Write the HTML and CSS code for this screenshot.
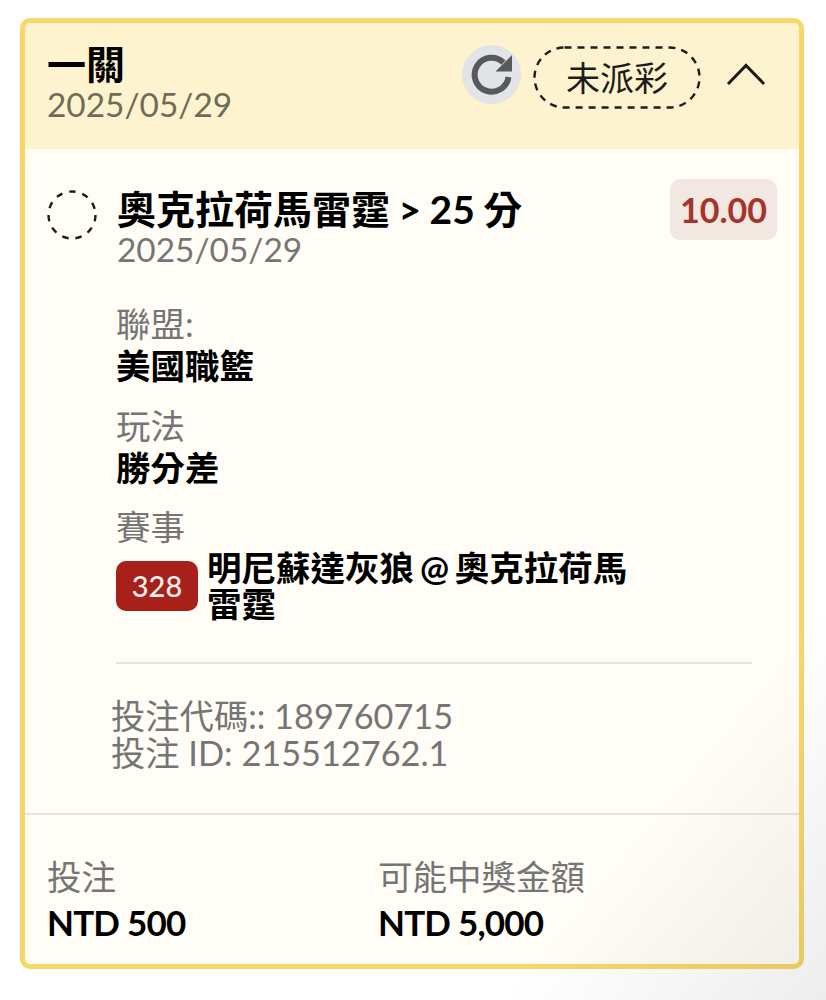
FILE: index.html
```html
<!DOCTYPE html>
<html>

<head>
    <meta charset="utf-8">
    <link rel="stylesheet" href="styles.css">
</head>

<body>
    <div class="card">
        <div class="card-head">
            <div class="head-title">
                <h1>一關</h1>
                <p>2025/05/29</p>
            </div>
            <div class="refresh">
                <svg width="59" height="59" viewBox="0 0 59 59">
                    <path d="M41.5 17.5A17 17 0 1 0 46.5 32" fill="none" stroke="#58595b" stroke-width="6"/>
                    <path d="M50 10V26.5H33.5Z" fill="#58595b"/>
                </svg>
            </div>
            <div class="status">
                <svg class="status-ring" width="168" height="63" viewBox="0 0 168 63">
                    <rect x="1.5" y="1.5" width="165" height="60" rx="30" fill="none" stroke="#1c1c1c" stroke-width="2.4" stroke-dasharray="7 6"/>
                </svg>
                <span>未派彩</span>
            </div>
            <svg class="chevron" width="40" height="24" viewBox="0 0 40 24">
                <path d="M2 22L20 3.5L38 22" fill="none" stroke="#1c1c1c" stroke-width="3"/>
            </svg>
        </div>

        <div class="card-body">
            <div class="bet-top">
                <svg class="bet-ring" width="50" height="50" viewBox="0 0 50 50">
                    <circle cx="25" cy="25" r="23.5" fill="none" stroke="#1c1c1c" stroke-width="2.4" stroke-dasharray="6.4 7"/>
                </svg>
                <div class="bet-title">
                    <h2>奧克拉荷馬雷霆 &gt; 25 分</h2>
                    <p>2025/05/29</p>
                </div>
                <div class="odds">10.00</div>
            </div>

            <div class="info">
                <div class="info-item">
                    <div class="label">聯盟:</div>
                    <div class="value">美國職籃</div>
                </div>
                <div class="info-item">
                    <div class="label">玩法</div>
                    <div class="value">勝分差</div>
                </div>
                <div class="info-item">
                    <div class="label">賽事</div>
                    <div class="match">
                        <span class="match-no">328</span>
                        <span class="value match-name">明尼蘇達灰狼 @ 奧克拉荷馬雷霆</span>
                    </div>
                </div>
            </div>

            <div class="codes">
                <div>投注代碼:: 189760715</div>
                <div>投注 ID: 215512762.1</div>
            </div>
        </div>

        <div class="card-foot">
            <div class="foot-col">
                <div class="label">投注</div>
                <div class="amount">NTD 500</div>
            </div>
            <div class="foot-col">
                <div class="label">可能中獎金額</div>
                <div class="amount">NTD 5,000</div>
            </div>
        </div>
    </div>
    <div class="shade"></div>
</body>

</html>
```

FILE: styles.css
```css
* {
    box-sizing: border-box;
}

body {
    margin: 0;
    height: 1000px;
    padding: 18px 22px 0 20px;
    overflow: hidden;
    background: #ffffff;
    color: #000000;
    font-family: "Lato", "Noto Sans CJK TC", sans-serif;
}

h1, h2, p {
    margin: 0;
}

.card {
    height: 951px;
    border: 5px solid #f6d768;
    border-radius: 10px;
    background: #fffdf6;
    display: flex;
    flex-direction: column;
    overflow: hidden;
}

.card-head {
    height: 126px;
    padding: 0 33px 0 22px;
    background: #fdf3cf;
    display: flex;
    align-items: flex-start;
}

.head-title {
    flex: 1;
    padding-top: 18px;
}

.head-title h1 {
    font-size: 39px;
    line-height: 46px;
    font-weight: 700;
}

.head-title p {
    font-size: 33.4px;
    line-height: 34px;
    color: #6f6b58;
}

.refresh {
    width: 59px;
    height: 59px;
    margin-top: 22px;
    border-radius: 50%;
    background: #e3e4e8;
    flex: none;
}

.status {
    position: relative;
    width: 168px;
    height: 63px;
    margin: 23px 25px 0 12px;
    padding-bottom: 3px;
    display: flex;
    justify-content: center;
    align-items: center;
    font-size: 34px;
    color: #1c1c1c;
}

.status-ring {
    position: absolute;
    left: 0;
    top: 0;
}

.chevron {
    margin-top: 39px;
}

.card-body {
    flex: 1;
    padding: 30px 22px 0 22px;
    border-bottom: 2px solid #e6e5df;
}

.bet-top {
    display: flex;
    align-items: flex-start;
}

.bet-ring {
    margin-top: 11px;
    flex: none;
}

.bet-title {
    flex: 1;
    padding-left: 20px;
}

.bet-title h2 {
    font-size: 39px;
    line-height: 60px;
    font-weight: 700;
    word-spacing: -1px;
}

.bet-title p {
    font-size: 33.4px;
    line-height: 20px;
    color: #757575;
}

.odds {
    width: 107px;
    height: 61px;
    border-radius: 10px;
    background: #f3e7e1;
    color: #a5352a;
    font-size: 34px;
    font-weight: 700;
    line-height: 61px;
    text-align: center;
}

.info {
    margin: 43px 25px 0 69px;
    padding-bottom: 40px;
    border-bottom: 2px solid #e6e5df;
}

.info-item {
    margin-bottom: 17.5px;
}

.info-item:last-child {
    margin-bottom: 0;
}

.label {
    font-size: 34.5px;
    line-height: 44px;
    color: #757575;
}

.value {
    font-size: 34.5px;
    line-height: 40px;
    font-weight: 700;
}

.match {
    display: flex;
    align-items: flex-start;
    gap: 9px;
    padding-right: 100px;
}

.match-no {
    flex: none;
    width: 82px;
    height: 50px;
    margin-top: 12px;
    border-radius: 10px;
    background: #a8201a;
    color: #fdf3ee;
    font-size: 29px;
    font-weight: 500;
    line-height: 49px;
    text-align: center;
}

.match-name {
    padding-top: 1px;
    line-height: 36px;
    word-spacing: -2.5px;
}

.codes {
    margin: 33px 0 0 64px;
    font-size: 34.3px;
    line-height: 37px;
    color: #757575;
}

.card-foot {
    height: 149px;
    padding: 40px 0 0 22px;
    display: flex;
}

.foot-col:first-child {
    width: 331px;
}

.amount {
    font-size: 35px;
    line-height: 46px;
    font-weight: 700;
    letter-spacing: -0.8px;
}

.shade {
    position: absolute;
    left: 0;
    top: 0;
    width: 826px;
    height: 1000px;
    pointer-events: none;
    background: linear-gradient(to bottom right, transparent 80%, rgba(0, 0, 0, 0.07) 100%);
}
```
